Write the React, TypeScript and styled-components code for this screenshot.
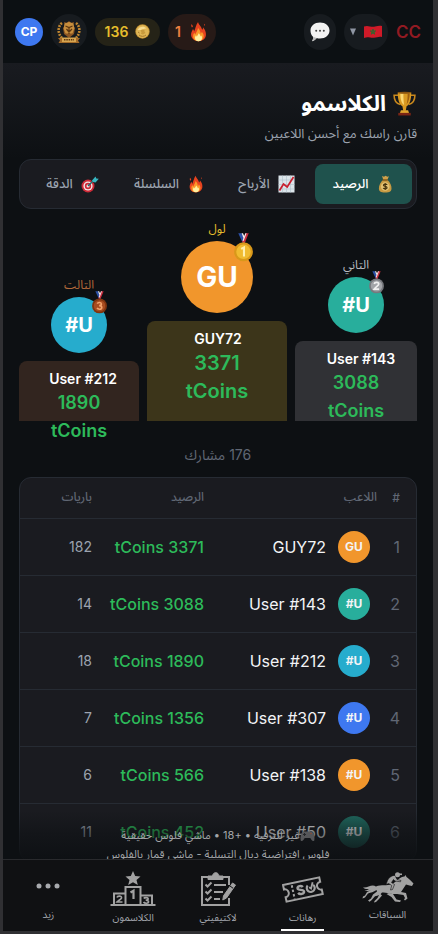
import React from "react";
import styled, { createGlobalStyle } from "styled-components";

const Global = createGlobalStyle`
  * { box-sizing: border-box; }
  html, body { margin: 0; background: #303033; }
  body { font-family: Inter, "Noto Sans Arabic", "DejaVu Sans", sans-serif; color: #fff; }
  button { font: inherit; color: inherit; border: 0; padding: 0; background: none; cursor: pointer; }
  svg { display: block; flex-shrink: 0; }
`;

const Shell = styled.div`
  height: calc(100vh - 3px);
  margin: 0 5px 3px 3px;
  display: flex;
  flex-direction: column;
  overflow: hidden;
  background: #0d1013;
`;

const Header = styled.header`
  height: 63px;
  flex-shrink: 0;
  padding: 0 12px;
  display: flex;
  align-items: center;
  justify-content: space-between;
  background: #0c1013;
`;
const Group = styled.div`
  display: flex;
  align-items: center;
  gap: 8px;
`;
const Brand = styled.a`
  color: #921a22;
  font-size: 17px;
  font-weight: 600;
  line-height: 24px;
  text-decoration: none;
`;
const Pill = styled.button<{ $bg: string; $fg?: string; $w: number; $h?: number }>`
  min-width: ${(p) => p.$w}px;
  height: ${(p) => p.$h ?? 36}px;
  border-radius: 18px;
  background: ${(p) => p.$bg};
  color: ${(p) => p.$fg ?? "#fff"};
  display: flex;
  align-items: center;
  justify-content: center;
  gap: 7px;
  font-size: 14px;
  font-weight: 600;
`;

const Main = styled.main`
  position: relative;
  flex: 1;
  min-height: 0;
  overflow: hidden;
`;
const Hero = styled.section`
  height: 96px;
  padding: 24px 16px 0;
  background: linear-gradient(#191b20, #0d1013);
`;
const Title = styled.h1`
  margin: 0;
  display: flex;
  align-items: center;
  gap: 6px;
  font-size: 22px;
  font-weight: 700;
  line-height: 32px;
`;
const Subtitle = styled.p`
  margin: 4px 0 0;
  font-size: 13px;
  line-height: 20px;
  color: #9ca3af;
`;
const Tabs = styled.div`
  margin: 0 16px;
  padding: 4px;
  display: flex;
  border: 1px solid #262b33;
  border-radius: 12px;
  background: #1a1b20;
`;
const Tab = styled.button<{ $active?: boolean }>`
  flex: 1;
  height: 40px;
  border-radius: 8px;
  display: flex;
  align-items: center;
  justify-content: center;
  gap: 8px;
  font-size: 13px;
  font-weight: 500;
  background: ${(p) => (p.$active ? "#1f524d" : "transparent")};
  color: ${(p) => (p.$active ? "#fff" : "#9ca3af")};
`;

const Podium = styled.section`
  margin: 8px 16px 0;
  height: 204px;
  display: grid;
  grid-template-columns: 122fr 140fr 120fr;
  gap: 8px;
  align-items: end;
`;
const Place = styled.div`
  display: flex;
  flex-direction: column;
  align-items: center;
`;
const Rank = styled.span<{ $color: string }>`
  font-size: 12px;
  line-height: 16px;
  margin-bottom: 4px;
  color: ${(p) => p.$color};
`;
const AvatarWrap = styled.div`
  position: relative;
  margin-bottom: 8px;
`;
const Avatar = styled.div<{ $bg: string; $size: number; $font: number }>`
  width: ${(p) => p.$size}px;
  height: ${(p) => p.$size}px;
  border-radius: 50%;
  background: ${(p) => p.$bg};
  font-size: ${(p) => p.$font}px;
  display: flex;
  align-items: center;
  justify-content: center;
  font-weight: 700;
  direction: ltr;
`;
const MedalSpot = styled.div<{ $top: number }>`
  position: absolute;
  top: ${(p) => p.$top}px;
  right: 0;
`;
const Block = styled.div<{ $bg: string; $h: number }>`
  width: 100%;
  height: ${(p) => p.$h}px;
  padding-top: 8px;
  border-radius: 8px 8px 0 0;
  background: ${(p) => p.$bg};
  text-align: center;
`;
const BlockName = styled.div<{ $pad: number }>`
  padding-left: ${(p) => p.$pad}px;
  font-size: 14px;
  font-weight: 600;
  line-height: 20px;
  direction: ltr;
`;
const Amount = styled.div<{ $font: number }>`
  margin: 0 auto;
  width: 80px;
  font-size: ${(p) => p.$font}px;
  line-height: 28px;
  font-weight: 600;
  color: #2dba5a;
`;
const Count = styled.p`
  margin: 24px 0 12px;
  text-align: center;
  font-size: 14px;
  line-height: 20px;
  color: #606774;
`;

const Board = styled.div`
  margin: 0 16px;
  border: 1px solid #262b33;
  border-radius: 12px;
  background: #1a1b20;
  overflow: hidden;
`;
const Table = styled.table`
  width: 100%;
  table-layout: fixed;
  border-collapse: collapse;
`;
const Th = styled.th<{ $w?: number; $pad?: number }>`
  width: ${(p) => (p.$w ? p.$w + "px" : "auto")};
  height: 40px;
  padding: 0 ${(p) => p.$pad ?? 0}px 0 0;
  border-bottom: 1px solid #262b33;
  text-align: right;
  font-size: 12px;
  font-weight: 500;
  color: #606774;
`;
const Td = styled.td<{ $pad?: number; $color: string; $font?: number; $weight?: number }>`
  height: 57px;
  padding: 0 ${(p) => p.$pad ?? 0}px 0 0;
  border-bottom: 1px solid #262b33;
  text-align: right;
  white-space: nowrap;
  font-size: ${(p) => p.$font ?? 16}px;
  font-weight: ${(p) => p.$weight ?? 400};
  color: ${(p) => p.$color};
`;
const Player = styled.div`
  display: flex;
  align-items: center;
  gap: 12px;
`;

const Notice = styled.div`
  position: absolute;
  inset: auto 0 0 0;
  height: 48px;
  padding-top: 15px;
  overflow: hidden;
  background: linear-gradient(rgba(13, 16, 19, 0), rgba(13, 16, 19, 0.5) 45%, rgba(13, 16, 19, 0.95));
  color: #a3a5a8;
  text-align: center;
  font-size: 11px;
  line-height: 19px;
  white-space: nowrap;
`;
const NoticeLine = styled.div`
  display: flex;
  justify-content: center;
  align-items: center;
`;

const Nav = styled.nav`
  height: 72px;
  flex-shrink: 0;
  padding: 0 3px;
  display: flex;
  border-top: 1px solid #292a2d;
  background: #101113;
`;
const NavItem = styled.a<{ $active?: boolean; $top: number }>`
  position: relative;
  flex: 1;
  display: flex;
  flex-direction: column;
  align-items: center;
  gap: 2px;
  padding-top: ${(p) => p.$top}px;
  color: #a3a7ae;
  font-size: 10px;
  line-height: 16px;
  text-decoration: none;
  &::after {
    content: "";
    display: ${(p) => (p.$active ? "block" : "none")};
    position: absolute;
    bottom: 0;
    width: 43px;
    height: 2px;
    background: #fff;
  }
`;

const Flame = ({ size }: { size: number }) => (
  <svg width={size} height={size} viewBox="0 0 24 24">
    <path d="M12 23C6.500 23 3.500 19.500 3.500 15.500c0-3 1.500-4.500 2.200-6.500.8 1 1.200 2 1.300 3C8.500 8.500 9 4.500 11.500 1c.3 3 4 5 4.700 9 .9-.8 1-1.800.9-3 2.200 2.300 3.700 5.500 3.400 9-.3 4-3.500 7-8.500 7z" fill="#e8431f" />
    <path d="M4.500 7.500c-1-1.500-1-2.500-.3-4 .4 1 1.500 1.800 1.300 3zM19 5.500c-.6-1-.4-1.800 0-2.500.6.800.8 1.700 0 2.500z" fill="#e8431f" />
    <path d="M12 23c-3.800 0-6.200-2.300-6.200-5.500 0-2 .8-3 1.300-4.200.7.800.9 1.600 1.200 2.200 1-2.500 2.600-4.500 3.200-7.500 2 2 2.700 4 3 6.500.8-.6 1.200-1.400 1.300-2.300 1.500 1.800 2.300 3.500 2.100 5.600-.2 3-2.400 5.200-5.900 5.200z" fill="#fb9a2a" />
    <path d="M12 23c-2.600 0-4-1.700-4-3.700 0-1.400.7-2.100 1.100-3 .5.500.8 1 1 1.600.7-1.300 1.700-2.200 2-3.900 1.600 1.300 2 2.500 2.200 3.700.4-.3.700-.6.900-1.100.6 1 .9 1.900.8 3-.2 2-1.600 3.400-4 3.400z" fill="#fff0a0" />
  </svg>
);

const Trophy = () => (
  <svg width="25" height="25" viewBox="0 0 24 24">
    <path d="M6.500 4H2c0 5 2 8 6 9M17.500 4H22c0 5-2 8-6 9" fill="none" stroke="#c9881d" strokeWidth="1.500" />
    <path d="M5.500 1.500h13c0 7-1.500 11.500-4.500 13.200L13.200 19h-2.400L10 14.700C7 13 5.500 8.500 5.500 1.500z" fill="#d99a22" />
    <path d="M8 2.500h3c-.2 4 .2 8 .6 11C9 12 8 7.500 8 2.500z" fill="#fbd873" />
    <path d="M15 2.500h2c0 4-1 8-3 10.500.8-3 1.100-7 1-10.500z" fill="#9c5d10" />
    <ellipse cx="12" cy="1.700" rx="6.500" ry="1" fill="#8a5410" />
    <path d="M8.500 18.500h7l1 3h-9z" fill="#e0a52e" />
    <path d="M6 21h12v2.500H6z" fill="#7b2414" />
  </svg>
);

const MoneyBag = () => (
  <svg width="18" height="18" viewBox="0 0 18 18">
    <path d="M6 1l2 .7L9.500.8l2 .9 1.500-.5-2 4.300H7.500z" fill="#cfa04a" />
    <path d="M7 5h4.500c2.500 2 4.200 5.500 4 8.500-.1 2.600-1.500 4-6.300 4s-6.200-1.400-6.300-4C2.800 10.500 4.500 7 7 5z" fill="#c79a42" />
    <path d="M6.500 4.300h5.200v1.400H6.500z" fill="#7d5416" />
    <circle cx="9.200" cy="11.500" r="4.300" fill="#e3c273" />
    <path d="M11.200 9.700c-.5-.8-3.800-1-3.800.5s3.700.9 3.700 2.500-3.400 1.400-3.900.4M9.200 8v7" fill="none" stroke="#44310d" strokeWidth="1.100" />
  </svg>
);

const Chart = () => (
  <svg width="17" height="18" viewBox="0 0 17 18">
    <path d="M.5.5h16v17H.5z" fill="#dce5ea" />
    <path d="M4.500.5v17M8.500.5v17M12.500.5v17M.5 5h16M.5 9.500h16M.5 14h16" stroke="#afc0c9" strokeWidth=".6" />
    <path d="M1.500 15.500L5.500 9l3.700 3L15.500 2" fill="none" stroke="#c9202f" strokeWidth="1.700" />
  </svg>
);

const Target = () => (
  <svg width="18" height="18" viewBox="0 0 18 18">
    <circle cx="7" cy="11" r="6.500" fill="#ce2a37" />
    <circle cx="7" cy="11" r="4.600" fill="#f3e9e9" />
    <circle cx="7" cy="11" r="3.200" fill="#ce2a37" />
    <circle cx="7" cy="11" r="1.500" fill="#f3e9e9" />
    <path d="M7 11L13 5" stroke="#20686f" strokeWidth="1.400" />
    <path d="M11 5.500L14.500 1.500l.8 2 2.500.3L14.500 7.500l-2.500-.4z" fill="#36b5bf" />
  </svg>
);

const Medal = ({ n, w }: { n: 1 | 2 | 3; w: number }) => {
  const c = { 1: ["#d9981a", "#f0bb30", "#fff0b0"], 2: ["#77797e", "#a2a4a8", "#f0f0f0"], 3: ["#80350f", "#a84c20", "#f2a26b"] }[n];
  return (
    <svg width={w} height={Math.round(w * 1.5)} viewBox="0 0 20 30">
      <path d="M4.500 0h3.500l4 9-2.500 2z" fill="#2b50a8" />
      <path d="M8 0h1.500L12 6l-1 2z" fill="#f1f1f4" />
      <path d="M15.500 0H12L8.500 9l2.500 2z" fill="#cb2d3e" />
      <path d="M12 0h1.200L10 8.500 9 7.500z" fill="#f1f1f4" />
      <circle cx="10" cy="19.500" r="9.900" fill={c[0]} />
      <circle cx="10" cy="19.500" r="7.600" fill={c[1]} />
      <path
        d={n === 1 ? "M7.500 16.500l3-1.500v9.500" : n === 2 ? "M7 17c.5-3.200 6-2.800 6 0 0 2-4 4-6 6.800h6.500" : "M7 16.500c1-2.300 5.500-2 5.500.6 0 1.500-1.500 2-3 2 1.800 0 3.500.7 3.500 2.500 0 3-5 3.200-6.200.7"}
        fill="none"
        stroke={c[2]}
        strokeWidth="2.200"
      />
    </svg>
  );
};

const Crest = () => (
  <svg width="26" height="24" viewBox="0 0 26 24">
    <path d="M6 3C2 6 1 13 6 18M20 3c4 3 5 10 0 15" fill="none" stroke="#bd8430" strokeWidth="2.600" strokeDasharray="2 1" />
    <path d="M8 2l3 1 2-2 2 2 3-1-1 3 2 3-1 6-5 4-5-4-1-6 2-3z" fill="#8b5522" />
    <path d="M8.500 3.500L13 2l4.500 1.500.8 5-1.800 5h-7L7.700 9z" fill="#c78e3d" />
    <path d="M9.500 6l3.500 1.500L16.500 6M10.500 9l2.500 3 3-3M13 7.500V14" fill="none" stroke="#5b3510" strokeWidth="1.200" />
    <path d="M2 18h22l-2 2.500 1.500 2.500H2.500L4 20.500z" fill="#a56b28" />
    <path d="M6 17.500h14v4.500H6z" fill="#d8a650" />
    <path d="M8 19.700h10" stroke="#5b3510" strokeWidth="1.500" strokeDasharray="1.500 .8" />
  </svg>
);

const Coin = () => (
  <svg width="15" height="15" viewBox="0 0 15 15">
    <circle cx="7.500" cy="7.500" r="7.200" fill="#bd8d30" />
    <circle cx="7.500" cy="7.500" r="6.500" fill="#e0b655" />
    <path d="M2.500 6C4 2.500 9 1.500 11.500 4.500 9 4 8 6 6 6z" fill="#f8dd92" />
    <path d="M5.500 6.500l1.500-1 2.500.5v1.500l1 1.500-2.500 1.500-2-.7.500-1.500z" fill="#c89a3c" />
    <path d="M4 11c2 1.800 5 1.800 7 0M3 8l1.500 1" fill="none" stroke="#a5772a" />
  </svg>
);

const Bubble = () => (
  <svg width="20" height="20" viewBox="0 0 20 20">
    <path d="M10 .5c5.500 0 9.500 3.500 9.500 8s-4 8-9.500 8c-1.300 0-2.200-.1-3.300-.5-1 1.500-2.700 2.800-4.700 3.300.8-1.300 1.300-2.700 1-4.500C1.300 13.300.5 11 .5 8.500c0-4.500 4-8 9.500-8z" fill="#f2f2f2" />
    <path d="M2 19.300c2-.5 3.700-1.800 4.700-3.300L3 14.800c.3 1.800-.2 3.200-1 4.500z" fill="#b9b9b9" />
    <circle cx="6.200" cy="8.800" r="1" fill="#444" />
    <circle cx="10" cy="8.800" r="1" fill="#444" />
    <circle cx="13.800" cy="8.800" r="1" fill="#444" />
  </svg>
);

const Flag = () => (
  <svg width="18" height="14" viewBox="0 0 18 14">
    <path d="M0 1.500C4-.3 7 2.500 11 1.500 14 .7 16 .3 18 1v11c-3-1-5 .5-8 .8-4 .3-6-1.300-10 .2z" fill="#cf1a28" />
    <path d="M9 4l1.700 5.200-4.400-3.200h5.400L7.300 9.200z" fill="none" stroke="#2a6a2e" strokeWidth=".9" />
  </svg>
);

const Caret = () => (
  <svg width="8" height="8" viewBox="0 0 8 8">
    <path d="M1 .5h6L4 7.500z" fill="#8f96a3" />
  </svg>
);

const Pad = () => (
  <svg width="15" height="12" viewBox="0 0 15 12">
    <path d="M3 1.500h9c2 2 3 6 2.300 9-1.500 1.500-3-.5-4-2.500H4.700c-1 2-2.500 4-4 2.500C0 7.500 1 3.500 3 1.500z" fill="#555659" />
    <path d="M4.500 3v3M3 4.500h3" stroke="#25272a" />
    <circle cx="11" cy="3.500" r=".8" fill="#944a31" />
  </svg>
);

const Horse = () => (
  <svg width="52" height="32" viewBox="0 0 52 32" fill="#a2a2a2">
    <path d="M14 14.500c4-2 8-1 12-1.500 5-.5 7-3 10-5.500 2.500-2 4.500-3 6.500-3L43.500 3l1 2c2 1.200 4.500 4 7 6.500L50 14l-2.500-.5-3.500-1c-1.500 2-3 5-5 7.500l5 1 1.500 5.500-2.500 2-1-1 1-1.500-1.500-3-6.500-1c-1.500 0-4 .3-6-.2-2.500-.6-6-1.800-9-1.300-1.500 2.500-4 3.200-7 3.700l-3.500 4-2 1.500L6 28.500l3-2 2-4 4-3-.5-1.500c-3 2-5.500 2.500-8.500 3.500L3 25.500l-2.500 1 .5-2 2-1 2-3.500c3-1 5.500-3.500 9-5.500z" />
    <path d="M13.500 14C9 12 6 16 1 15.500c2 2 4 1.500 6 1.500-1.500 1-3 1.500-4.500 1.500C7 20 11 18 14 16.500zM27 21l4 1 3.500 5.500 4.500 1-1 1.500-5-.5-3.500-4.500-5-3zM17 20.500l3 3-3 3.500-3 3-2 .5.500-1.500 3-3 1.500-3z" />
    <path d="M24 12.500l1.500-4C27 5.500 30 3 33 3.500l2 4 4 1-.5 1.300-5.500-.8-1.500-1.500-2 3 3 2-2 5-2 .5 1.200-4.500-3-2z" stroke="#101113" strokeWidth=".6" />
    <circle cx="35.500" cy="2.800" r="2.500" />
    <path d="M36 1.500h4v1.600h-4z" />
  </svg>
);

const Ticket = () => (
  <svg width="42" height="32" viewBox="0 0 42 32" fill="none" stroke="#a2a2a2">
    <g transform="rotate(-12 21 15)" strokeWidth="2">
      <path d="M2.500 6h37v4.500a4 4 0 0 0 0 8V23h-37v-4.500a4 4 0 0 0 0-8z" />
      <path d="M11 8v14" strokeDasharray="2.500 2" />
      <path d="M21.500 12c-1-2.200-5.500-2-5.500.5 0 2.500 5.700 1.300 5.700 4 0 2.700-5 2.800-6 .2" strokeWidth="2.400" />
      <path d="M26.500 11.500a4 4 0 1 0 5.500.5" strokeWidth="2.200" />
      <path d="M27.500 13.500l1.700 1.700L32 9.500" strokeWidth="1.800" />
    </g>
  </svg>
);

const Clipboard = () => (
  <svg width="38" height="36" viewBox="0 0 38 36" fill="none" stroke="#a2a2a2" strokeWidth="2">
    <path d="M10 6H3v28h27v-7M23 6h7v8" />
    <path d="M9 8.500V5h4.500c.5-4.500 6-4.500 6.500 0H24v3.500z" fill="#a2a2a2" strokeWidth="1" />
    <path d="M6.500 13.500l2 2 4-4M6.500 20.500l2 2 4-4M6.500 27.500l2 2 4-4M15 14h12M15 21h9M15 28h6" />
    <path d="M33.500 12l3 2-9 13-3.700 2 .7-4.200z" fill="#a2a2a2" strokeWidth="1" />
    <path d="M31 15l3 2.200" stroke="#101113" strokeWidth="1" />
  </svg>
);

const Stand = () => (
  <svg width="46" height="36" viewBox="0 0 46 36" fill="none" stroke="#a2a2a2" strokeWidth="2">
    <path d="M23 0l2.200 5 5.300.5-4 3.500 1.300 5-4.800-2.800L18.200 14l1.300-5-4-3.500 5.300-.5z" fill="#a2a2a2" stroke="none" />
    <path d="M.5 34h45M4 34V22.500h11.500V34M15.500 34V16h15v18M30.500 24.500H42V34" />
    <path d="M20.500 21.500l3-1.800V28" strokeWidth="2.200" />
    <path d="M7 26.500c.5-2 5-1.800 4.500.4C11 28.500 8 29.500 7 31h5.500M33.800 27.500c.8-1.300 4.500-1.200 4.300.4 0 1.200-1.500 1.300-2.400 1.300 1.200 0 2.800.2 2.800 1.600 0 1.800-3.800 2-5 .3" strokeWidth="1.700" />
  </svg>
);

const Dots = () => (
  <svg width="24" height="36" viewBox="0 0 24 36" fill="#a8aaae">
    <circle cx="3" cy="18" r="2.500" />
    <circle cx="12" cy="18" r="2.500" />
    <circle cx="21" cy="18" r="2.500" />
  </svg>
);

const tabs = [
  { label: "الرصيد", icon: <MoneyBag />, active: true },
  { label: "الأرباح", icon: <Chart /> },
  { label: "السلسلة", icon: <Flame size={18} /> },
  { label: "الدقة", icon: <Target /> },
];

const places = [
  { n: 2 as const, rank: "التاني", color: "#b9bcc1", init: "#U", bg: "#28ae9c", size: 56, font: 20, medal: 15, top: -6, block: "#303135", h: 80, name: "User #143", pad: 10, amount: 3088, amountFont: 18 },
  { n: 1 as const, rank: "لول", color: "#e5bd2c", init: "GU", bg: "#f1962c", size: 72, font: 28, medal: 19, top: -8, block: "#3c351a", h: 100, name: "GUY72", pad: 2, amount: 3371, amountFont: 20 },
  { n: 3 as const, rank: "التالت", color: "#b1683a", init: "#U", bg: "#26accd", size: 56, font: 20, medal: 15, top: -6, block: "#32251f", h: 60, name: "User #212", pad: 8, amount: 1890, amountFont: 18 },
];

const rows = [
  { name: "GUY72", init: "GU", bg: "#f1962c", coins: 3371, games: 182 },
  { name: "User #143", init: "#U", bg: "#28ae9c", coins: 3088, games: 14 },
  { name: "User #212", init: "#U", bg: "#26accd", coins: 1890, games: 18 },
  { name: "User #307", init: "#U", bg: "#3e78f0", coins: 1356, games: 7 },
  { name: "User #138", init: "#U", bg: "#f1962c", coins: 566, games: 6 },
  { name: "User #50", init: "#U", bg: "#20695f", coins: 452, games: 11 },
];

const nav = [
  { label: "السباقات", icon: <Horse />, top: 12 },
  { label: "رهانات", icon: <Ticket />, top: 15, active: true },
  { label: "لاكتيفيتي", icon: <Clipboard />, top: 11 },
  { label: "الكلاسمون", icon: <Stand />, top: 11 },
  { label: "زيد", icon: <Dots />, top: 8 },
];

export default function App() {
  return (
    <Shell dir="rtl">
      <Global />
      <Header>
        <Group>
          <Brand href="#">CC</Brand>
          <Pill $bg="#171b1f" $w={44} aria-label="language">
            <Flag />
            <Caret />
          </Pill>
          <Pill $bg="#171b1f" $w={32} aria-label="chat">
            <Bubble />
          </Pill>
        </Group>
        <Group>
          <Pill $bg="#271a17" $fg="#ee8040" $w={48}>
            <Flame size={21} />1
          </Pill>
          <Pill $bg="#252317" $fg="#e5bd2c" $w={65} $h={28}>
            <Coin />
            136
          </Pill>
          <Pill $bg="#171b1f" $w={36} aria-label="badge">
            <Crest />
          </Pill>
          <Avatar $bg="#3e78f0" $size={28} $font={12}>CP</Avatar>
        </Group>
      </Header>
      <Main>
        <Hero>
          <Title>
            <Trophy />
            الكلاسمو
          </Title>
          <Subtitle>قارن راسك مع أحسن اللاعبين</Subtitle>
        </Hero>
        <Tabs role="tablist">
          {tabs.map((t) => (
            <Tab key={t.label} $active={t.active} role="tab" aria-selected={!!t.active}>
              {t.icon}
              {t.label}
            </Tab>
          ))}
        </Tabs>
        <Podium>
          {places.map((p) => (
            <Place key={p.n}>
              <Rank $color={p.color}>{p.rank}</Rank>
              <AvatarWrap>
                <Avatar $bg={p.bg} $size={p.size} $font={p.font}>{p.init}</Avatar>
                <MedalSpot $top={p.top}>
                  <Medal n={p.n} w={p.medal} />
                </MedalSpot>
              </AvatarWrap>
              <Block $bg={p.block} $h={p.h}>
                <BlockName $pad={p.pad}>{p.name}</BlockName>
                <Amount $font={p.amountFont}>{p.amount} tCoins</Amount>
              </Block>
            </Place>
          ))}
        </Podium>
        <Count>176 مشارك</Count>
        <Board>
          <Table>
            <thead>
              <tr>
                <Th $w={39} $pad={16}>#</Th>
                <Th>اللاعب</Th>
                <Th $w={112}>الرصيد</Th>
                <Th $w={72}>باريات</Th>
              </tr>
            </thead>
            <tbody>
              {rows.map((r, i) => (
                <tr key={r.name}>
                  <Td $pad={16} $color="#606774">{i + 1}</Td>
                  <Td $pad={7} $color="#f3f4f6">
                    <Player>
                      <Avatar $bg={r.bg} $size={32} $font={12}>{r.init}</Avatar>
                      <bdi>{r.name}</bdi>
                    </Player>
                  </Td>
                  <Td $color="#2dba5a" $weight={500}><bdi dir="ltr">tCoins {r.coins}</bdi></Td>
                  <Td $color="#9ca3af" $font={14}>{r.games}</Td>
                </tr>
              ))}
            </tbody>
          </Table>
        </Board>
        <Notice>
          <NoticeLine><Pad />غير للترفيه • +18 • ماشي فلوس حقيقية</NoticeLine>
          <NoticeLine>فلوس افتراضية ديال التسلية - ماشي قمار بالفلوس</NoticeLine>
        </Notice>
      </Main>
      <Nav>
        {nav.map((n) => (
          <NavItem key={n.label} href="#" $active={n.active} $top={n.top}>
            {n.icon}
            {n.label}
          </NavItem>
        ))}
      </Nav>
    </Shell>
  );
}
